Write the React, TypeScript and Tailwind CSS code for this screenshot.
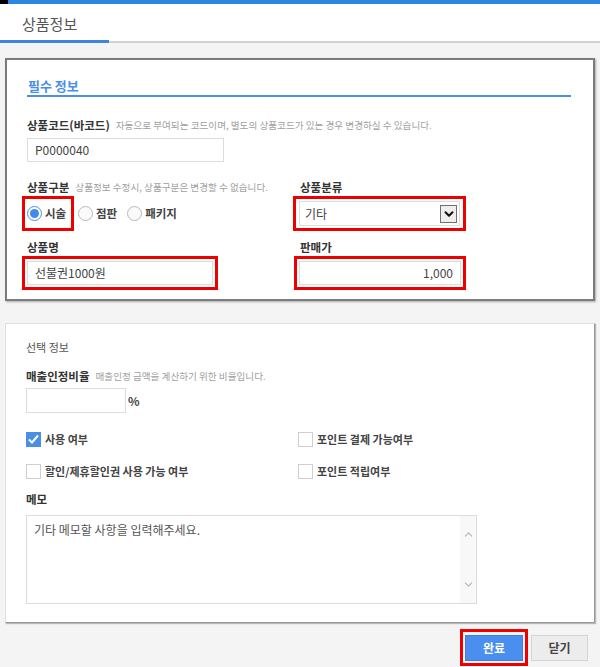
import { ChevronDown, ChevronUp } from "lucide-react";

const Radio = ({ checked, label }: { checked?: boolean; label: string }) => (
  <label className="flex items-center gap-[3px]">
    <span
      className={
        checked
          ? "flex h-[15px] w-[15px] items-center justify-center rounded-full border border-[#4a8fe7] bg-white"
          : "h-[15px] w-[15px] rounded-full border border-[#b9b9b9] bg-[#fafafa]"
      }
    >
      {checked && <span className="h-[9px] w-[9px] rounded-full bg-[#3f8ae8]" />}
    </span>
    <span className="text-[11.5px] font-bold text-[#444]">{label}</span>
  </label>
);

const Check = ({ checked, label }: { checked?: boolean; label: string }) => (
  <label className="flex h-[20px] items-center gap-[4px]">
    {checked ? (
      <span className="flex h-[15px] w-[15px] items-center justify-center bg-[#4a8fe7]">
        <svg width="13" height="13" viewBox="0 0 13 13">
          <path d="M2 6.5 L5 9.5 L11 2.5" fill="none" stroke="#fff" strokeWidth="2" />
        </svg>
      </span>
    ) : (
      <span className="h-[15px] w-[15px] border border-[#cfcfcf] bg-white" />
    )}
    <span className="text-[11px] font-bold text-[#444]">{label}</span>
  </label>
);

const Label = ({ text, hint }: { text: string; hint?: string }) => (
  <div className="flex h-[17px] items-center gap-[6px]">
    <span className="text-[11.5px] font-bold text-[#333]">{text}</span>
    {hint && <span className="text-[9.6px] text-[#a0a0a0]">{hint}</span>}
  </div>
);

const Field = ({ value, className }: { value: string; className: string }) => (
  <div
    className={`flex h-[24px] items-center border border-[#dcdcdc] bg-white px-[7px] text-[12px] text-[#444] ${className}`}
  >
    {value}
  </div>
);

export default function App() {
  return (
    <div className="h-[667px] w-[600px] overflow-hidden bg-[#f4f4f4] font-['Noto_Sans_CJK_KR','Liberation_Sans',sans-serif]">
      {/* top strip */}
      <div className="flex h-[4px] bg-[#2c86e0]">
        <div className="w-[8px] bg-black" />
      </div>

      {/* tab header */}
      <div className="flex h-[39px] border-b-2 border-[#d0d0d0] bg-white">
        <div className="h-[39px] w-[109px] border-b-[3px] border-[#3b86de] pl-[22px] pt-[9px] text-[15px] text-[#555]">
          상품정보
        </div>
      </div>

      <div className="px-[5px] pt-[15px]">
        {/* 필수 정보 */}
        <div className="border-2 border-[#7b7b7b] bg-white pb-[9px] pl-[20px] pr-[22px] pt-[17px] shadow-[1px_1px_2px_rgba(0,0,0,0.3)]">
          <div className="h-[20px] border-b-2 border-[#4a8fe7] pl-[1px] text-[13px] font-bold leading-[18px] text-[#4a8fe7]">
            필수 정보
          </div>

          <div className="mt-[20px]">
            <Label text="상품코드(바코드)" hint="자동으로 부여되는 코드이며, 별도의 상품코드가 있는 경우 변경하실 수 있습니다." />
            <Field value="P0000040" className="mt-[4px] w-[197px]" />
          </div>

          <div className="mt-[17px] grid grid-cols-[273px_1fr]">
            <div>
              <Label text="상품구분" hint="상품정보 수정시, 상품구분은 변경할 수 없습니다." />
              <div className="flex h-[35px] items-center">
                <div className="-ml-[5px] flex h-[35px] w-[52px] items-center border-[3px] border-[#ee0000] pl-[2px]">
                  <Radio checked label="시술" />
                </div>
                <div className="ml-[4px] flex gap-[10px]">
                  <Radio label="점판" />
                  <Radio label="패키지" />
                </div>
              </div>
              <div className="mt-[8px]">
                <Label text="상품명" />
                <div className="-ml-[5px] w-[196px] border-[3px] border-[#ee0000] p-[2px]">
                  <Field value="선불권1000원" className="w-full" />
                </div>
              </div>
            </div>

            <div>
              <Label text="상품분류" />
              <div className="-ml-[7px] w-[173px] border-[3px] border-[#ee0000] px-[3px] py-[2px]">
                <div className="flex h-[25px] items-center justify-between border border-[#dcdcdc] bg-white pl-[5px] pr-[2px] text-[12px] text-[#444]">
                  기타
                  <span className="flex h-[18px] w-[17px] items-center justify-center border border-[#707070] bg-[#eeeeee]">
                    <ChevronDown size={14} strokeWidth={3.5} color="#111" />
                  </span>
                </div>
              </div>
              <div className="mt-[8px]">
                <Label text="판매가" />
                <div className="-ml-[6px] w-[172px] border-[3px] border-[#ee0000] p-[2px]">
                  <Field value="1,000" className="w-full justify-end" />
                </div>
              </div>
            </div>
          </div>
        </div>

        {/* 선택 정보 */}
        <div className="mt-[22px] h-[300px] border border-[#e0e0e0] border-b-[#9a9a9a] border-r-[#9a9a9a] bg-white pl-[20px] pt-[16px] shadow-[1px_1px_1px_rgba(0,0,0,0.25)]">
          <div className="h-[15px] text-[11px] leading-[15px] text-[#555]">선택 정보</div>

          <div className="mt-[13px]">
            <Label text="매출인정비율" hint="매출인정 금액을 계산하기 위한 비율입니다." />
            <div className="mt-[3px] flex items-center gap-[2px]">
              <div className="h-[25px] w-[100px] border border-[#dcdcdc] bg-white" />
              <span className="text-[12px] font-bold text-[#444]">%</span>
            </div>
          </div>

          <div className="mt-[16px] grid grid-cols-[272px_1fr] gap-y-[12px]">
            <Check checked label="사용 여부" />
            <Check label="포인트 결제 가능여부" />
            <Check label="할인/제휴할인권 사용 가능 여부" />
            <Check label="포인트 적립여부" />
          </div>

          <div className="mt-[10px]">
            <Label text="메모" />
            <div className="mt-[7px] flex h-[89px] w-[451px] border border-[#dcdcdc] bg-white">
              <div className="flex-1 px-[7px] pt-[5px] text-[12px] text-[#555]">기타 메모할 사항을 입력해주세요.</div>
              <div className="flex w-[16px] flex-col items-center justify-between bg-[#f8f8f8] py-[12px]">
                <ChevronUp size={13} color="#b4b4b4" />
                <ChevronDown size={13} color="#b4b4b4" />
              </div>
            </div>
          </div>
        </div>

        {/* buttons */}
        <div className="mt-[6px] flex justify-end gap-[3px] pr-[7px]">
          <div className="border-[3px] border-[#ee0000] p-[2px]">
            <button className="h-[26px] w-[58px] border border-[#3d7fe0] bg-[#4a8ef0] text-[12px] font-bold text-white">
              완료
            </button>
          </div>
          <div className="pt-[5px]">
            <button className="h-[26px] w-[57px] border border-[#d5d5d5] bg-[#ececec] text-[12px] font-bold text-[#444]">
              닫기
            </button>
          </div>
        </div>
      </div>
    </div>
  );
}
